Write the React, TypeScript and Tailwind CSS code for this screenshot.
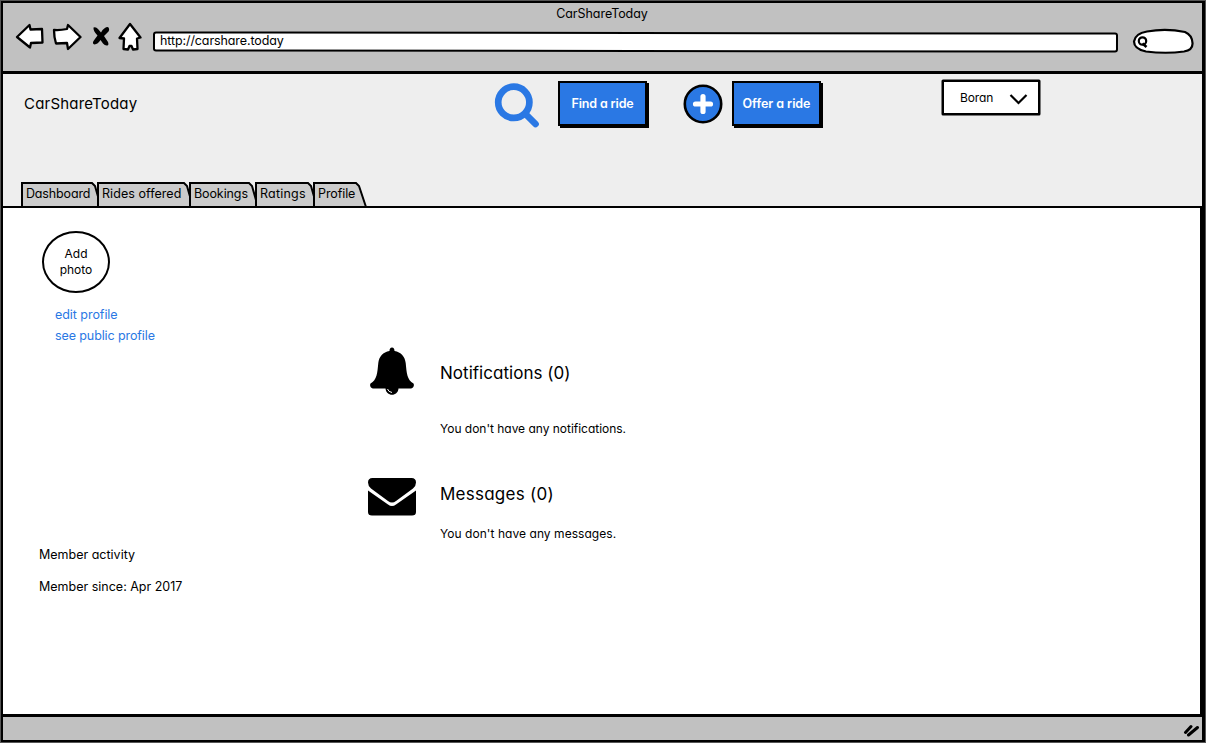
import React from "react";

const tabs = [
  { label: "Dashboard", box: "w-[76px]", text: "tracking-[-0.15px]", d: "M1 26V2H71L74 5L80 26" },
  { label: "Rides offered", box: "w-[92px]", text: "tracking-[0.05px]", d: "M1 26V2H87L90 5L96 26" },
  { label: "Bookings", box: "w-[66px]", text: "tracking-[-0.1px]", d: "M1 26V2H60L63 5L69 26" },
  { label: "Ratings", box: "w-[58px]", text: "tracking-[0.2px]", d: "M1 26V2H53L56 5L62 26" },
  { label: "Profile", box: "w-[54px]", text: "tracking-[-0.1px]", d: "M1 26V2H43L46 5L53 26" },
];

function BrowserBar() {
  return (
    <header className="flex h-[71px] flex-col border-b-[3px] border-black bg-[#c1c1c1]">
      <div className="flex h-[20px] items-center justify-center text-[12.5px] leading-[20px] tracking-[-0.05px]">
        <span className="pr-px pt-[2px]">CarShareToday</span>
      </div>
      <div className="flex h-[28px] items-center pl-[12px]">
        <svg className="h-[28px] w-[30px] shrink-0" viewBox="0 0 30 28" fill="white" stroke="black" strokeWidth="2.3" strokeLinejoin="round">
          <path d="M2 14L14.500 2L15.500 6.500L27 6L27.500 19.500L16 20L15 24.500Z" />
        </svg>
        <svg className="ml-[7px] h-[28px] w-[30px] shrink-0" viewBox="0 0 30 28" fill="white" stroke="black" strokeWidth="2.3" strokeLinejoin="round">
          <path d="M2 7Q8 7.500 15 6L16 2L28.500 14L16 26L15 20L4 20.500Q2 14 2 7Z" />
        </svg>
        <svg className="ml-[10px] h-[22px] w-[18px] shrink-0" viewBox="0 0 18 22" fill="black">
          <path d="M1.500 1.500Q4 0.500 6 3L9 6.500Q12 1 16 1Q18 3 16.500 5.500L12 10L16 16Q17 19 15.500 19.500Q13 20 11 17.500L8.500 14Q6 18 2.500 18.500Q0 17.500 1.500 15L5.500 9.500Q1 5 1.500 1.500Z" />
        </svg>
        <svg className="ml-[8px] h-[30px] w-[24px] shrink-0" viewBox="0 0 24 30" fill="white" stroke="black" strokeWidth="2.3" strokeLinejoin="round">
          <path d="M12 2L22.500 15.500L19 16.500L19.500 27L15 27.500L13.500 24H11.500L10 27.500L5.500 27L6 16.500L1.500 16Z" />
        </svg>
        <div className="relative ml-[11px] mt-[8px] h-[20px] w-[965px] shrink-0">
          <div className="absolute inset-x-0 top-[0.5px] h-[20px] rotate-[0.07deg] rounded-[3px] border-2 border-black bg-white" />
          <span className="relative block pl-[7px] text-[12.5px] leading-[19px] tracking-[-0.1px]">http://carshare.today</span>
        </div>
        <svg className="ml-[14px] mt-[8px] h-[26px] w-[62px] shrink-0" viewBox="0 0 62 26" fill="white" stroke="black" strokeWidth="2.200">
          <path d="M15 3.500Q34 0 53 4Q60 7 60.500 15Q61 22 52 23.500Q34 26 14 23.500Q2 21 2 13.500Q3 5.500 15 3.500Z" />
          <circle cx="10.500" cy="13" r="3.700" />
          <path d="M10.500 15.500L14.500 19" strokeWidth="2.600" />
        </svg>
      </div>
    </header>
  );
}

function ActionButton({ label, text }: { label: string; text: string }) {
  return (
    <button className="flex h-[45px] w-[89px] items-center justify-center border-2 border-black bg-[#2a78e4] pt-[2px] text-white shadow-[2px_2px_0_0_#000]">
      <span className={text}>{label}</span>
    </button>
  );
}

function SiteHeader() {
  return (
    <section className="flex h-[132px] flex-col bg-[#eeeeee]">
      <div className="flex h-[107px] items-start">
        <h1 className="ml-[21px] mt-[20px] w-[470px] text-[15px] leading-[20px] tracking-[0.2px]">CarShareToday</h1>
        <svg className="mt-[9px] h-[46px] w-[46px]" viewBox="0 0 46 46" fill="none" stroke="#2a78e4" strokeWidth="6.700">
          <circle cx="19.800" cy="19.300" r="15.600" />
          <path d="M31.500 31L41.500 41" strokeLinecap="round" />
        </svg>
        <div className="ml-[18px] mt-[7px]">
          <ActionButton label="Find a ride" text="text-[12.5px] font-semibold tracking-[-0.15px]" />
        </div>
        <svg className="ml-[36px] mt-[10px] h-[40px] w-[40px]" viewBox="0 0 40 40">
          <circle cx="20" cy="20" r="18.200" fill="#2a78e4" stroke="black" strokeWidth="2.600" />
          <path d="M20 12.500V27.500M12.500 20H27.500" stroke="white" strokeWidth="5.200" strokeLinecap="round" />
        </svg>
        <div className="ml-[9px] mt-[7px]">
          <ActionButton label="Offer a ride" text="text-[12.5px] font-semibold tracking-[-0.05px]" />
        </div>
        <button className="ml-[121px] mt-[6px] flex h-[35px] w-[98px] items-center rounded-[1px] border-[2.5px] border-black bg-white pl-[16px] shadow-[0_0_0_0.5px_#000]">
          <span className="w-[49px] pt-[1px] text-left text-[12px] tracking-[-0.1px]">Boran</span>
          <svg className="mt-[2px] h-[12px] w-[20px]" viewBox="0 0 20 12" fill="none" stroke="black" strokeWidth="2.200">
            <path d="M1.500 2L9.500 10L17.500 2" />
          </svg>
        </button>
      </div>
      <nav className="flex h-[25px] pl-[18px]">
        {tabs.map((tab) => (
          <a key={tab.label} className={`relative block h-[25px] ${tab.box}`}>
            <svg className="absolute left-0 top-0 h-[25px] w-full overflow-visible" fill="#cbcbcb" stroke="black" strokeWidth="2">
              <path d={tab.d} />
            </svg>
            <span className={`relative block whitespace-nowrap pl-[5px] text-[12.5px] leading-[25px] ${tab.text}`}>{tab.label}</span>
          </a>
        ))}
      </nav>
    </section>
  );
}

function Main() {
  return (
    <main className="relative flex h-[511px] border-b-[3px] border-r-2 border-t-2 border-black bg-white">
      <aside className="flex w-[365px] shrink-0 flex-col pl-[36px] pt-[23px]">
        <button className="ml-[3px] flex h-[62px] w-[68px] items-center justify-center rounded-[50%] border-2 border-black">
          <span className="pb-[1px] text-center text-[12px] leading-[16px] tracking-[0px]">Add<br />photo</span>
        </button>
        <div className="ml-[16px] mt-[11px] flex flex-col text-[12.5px] leading-[21px] text-[#2a78e4]">
          <a className="tracking-[-0.05px]">edit profile</a>
          <a className="tracking-[-0.1px]">see public profile</a>
        </div>
        <div className="mt-[199px] flex flex-col gap-[12px] text-[12.5px] leading-[20px]">
          <p className="tracking-[0px]">Member activity</p>
          <p className="tracking-[0px]">Member since: Apr 2017</p>
        </div>
      </aside>
      <div className="flex flex-col">
        <section className="mt-[138px] flex h-[131px]">
          <svg className="h-[50px] w-[48px]" viewBox="0 0 48 50">
            <path d="M24 1.500C25.700 1.500 26.500 2.700 26.500 5C33 6.200 37 10.500 37.700 17C38.700 27 39 34 45.500 37.500C46.500 39.500 45.500 42 43 42.500H5C2.500 42 1.500 39.500 2.500 37.500C9 34 9.300 27 10.300 17C11 10.500 15 6.200 21.500 5C21.500 2.700 22.300 1.500 24 1.500Z" />
            <path d="M17.500 42H30.500C30.500 51 17.500 51 17.500 42Z" />
            <path d="M19.500 43Q20.500 46 24 46.500" fill="none" stroke="white" strokeWidth="1" />
          </svg>
          <div className="ml-[24px] flex flex-col">
            <h2 className="mt-[15px] text-[17px] leading-[24px] tracking-[0.03px]">Notifications (0)</h2>
            <p className="mt-[34px] text-[12px] leading-[20px] tracking-[-0.02px]">You don't have any notifications.</p>
          </div>
        </section>
        <section className="flex">
          <svg className="mt-[1px] h-[38px] w-[48px]" viewBox="0 0 48 38">
            <path d="M4.500 0H43.500Q48 0 48 4.500Q48 8 45 10.500L28 23Q24 26 20 23L3 10.500Q0 8 0 4.500Q0 0 4.500 0Z" />
            <path d="M0 12.500L20 26.500Q24 29.500 28 26.500L48 12.500V34Q48 37.500 44 37.500H4Q0 37.500 0 34Z" />
          </svg>
          <div className="ml-[24px] flex flex-col">
            <h2 className="mt-[5px] text-[17px] leading-[24px] tracking-[0.25px]">Messages (0)</h2>
            <p className="mt-[18px] text-[12px] leading-[20px] tracking-[0.05px]">You don't have any messages.</p>
          </div>
        </section>
      </div>
    </main>
  );
}

export default function App() {
  return (
    <div className="h-[743px] w-[1206px] overflow-hidden bg-white pl-px pt-px font-['Inter','Lato',sans-serif] text-black [font-feature-settings:'cv11']">
      <div className="flex h-[741px] w-[1204px] flex-col border-2 border-r-[3px] border-black shadow-[0_0_0_1px_#555]">
        <BrowserBar />
        <SiteHeader />
        <Main />
        <footer className="flex flex-1 items-center justify-end bg-[#c1c1c1] pr-[2px] pt-[2px]">
          <svg className="h-[14px] w-[18px]" viewBox="0 0 18 14" fill="none" stroke="black" strokeWidth="3" strokeLinecap="round">
            <path d="M3.500 9.500L9 3.500M6.500 12L15.500 4.500" />
          </svg>
        </footer>
      </div>
    </div>
  );
}
